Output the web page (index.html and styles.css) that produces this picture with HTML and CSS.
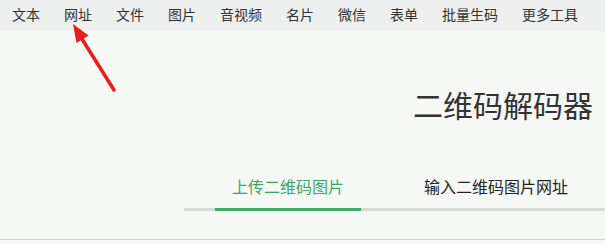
FILE: index.html
```html
<!DOCTYPE html>
<html lang="zh-CN">
<head>
    <meta charset="UTF-8">
    <meta name="viewport" content="width=device-width, initial-scale=1.0">
    <title>二维码解码器</title>
    <link rel="stylesheet" href="styles.css">
</head>
<body>

<!-- Top navigation -->
<div class="nav">
    <a href="#">文本</a>
    <a href="#">网址</a>
    <a href="#">文件</a>
    <a href="#">图片</a>
    <a href="#">音视频</a>
    <a href="#">名片</a>
    <a href="#">微信</a>
    <a href="#">表单</a>
    <a href="#">批量生码</a>
    <a href="#">更多工具</a>
</div>

<div class="page">
    <div class="main">
        <h1 class="title">二维码解码器</h1>

        <div class="tabs">
            <div class="tab active">上传二维码图片</div>
            <div class="tab">输入二维码图片网址</div>
        </div>
    </div>
</div>

<!-- Annotation arrow pointing at 网址 -->
<svg class="arrow" width="130" height="100" viewBox="0 0 130 100">
    <line x1="82" y1="39" x2="114" y2="90" stroke="#ee1b1b" stroke-width="3.5" stroke-linecap="round"/>
    <polygon points="73,24 88.5,35.5 76.5,43" fill="#ee1b1b"/>
</svg>

</body>
</html>
```

FILE: styles.css
```css
* {
    margin: 0;
    padding: 0;
    box-sizing: border-box;
}

body {
    font-family: "Noto Sans CJK SC", "Noto Sans", sans-serif;
    background-color: #f6f8f6;
    color: #333;
    overflow: hidden;
}

.nav {
    display: flex;
    height: 31px;
    background-color: #edf0ee;
    white-space: nowrap;
}

.nav a {
    padding: 0 12px;
    font-size: 14px;
    line-height: 28px;
    color: #333;
    text-decoration: none;
}

.page {
    padding-bottom: 28px;
    border-bottom: 1px solid #cfd1d0;
}

.main {
    margin-left: 184px;
}

.title {
    margin-top: 53px;
    padding-right: 12px;
    text-align: right;
    font-size: 30px;
    font-weight: normal;
    line-height: 40px;
    color: #333;
}

.tabs {
    display: flex;
    margin-top: 50px;
    border-bottom: 3px solid #d6dbd8;
}

.tab {
    position: relative;
    width: 208px;
    padding-bottom: 10px;
    text-align: center;
    font-size: 16px;
    line-height: 24px;
    color: #222;
    cursor: pointer;
}

.tab.active {
    color: #3aa765;
}

.tab.active::after {
    content: "";
    position: absolute;
    left: 31px;
    right: 31px;
    bottom: -3px;
    height: 3px;
    background-color: #45a96c;
}

.arrow {
    position: absolute;
    top: 0;
    left: 0;
}
```
